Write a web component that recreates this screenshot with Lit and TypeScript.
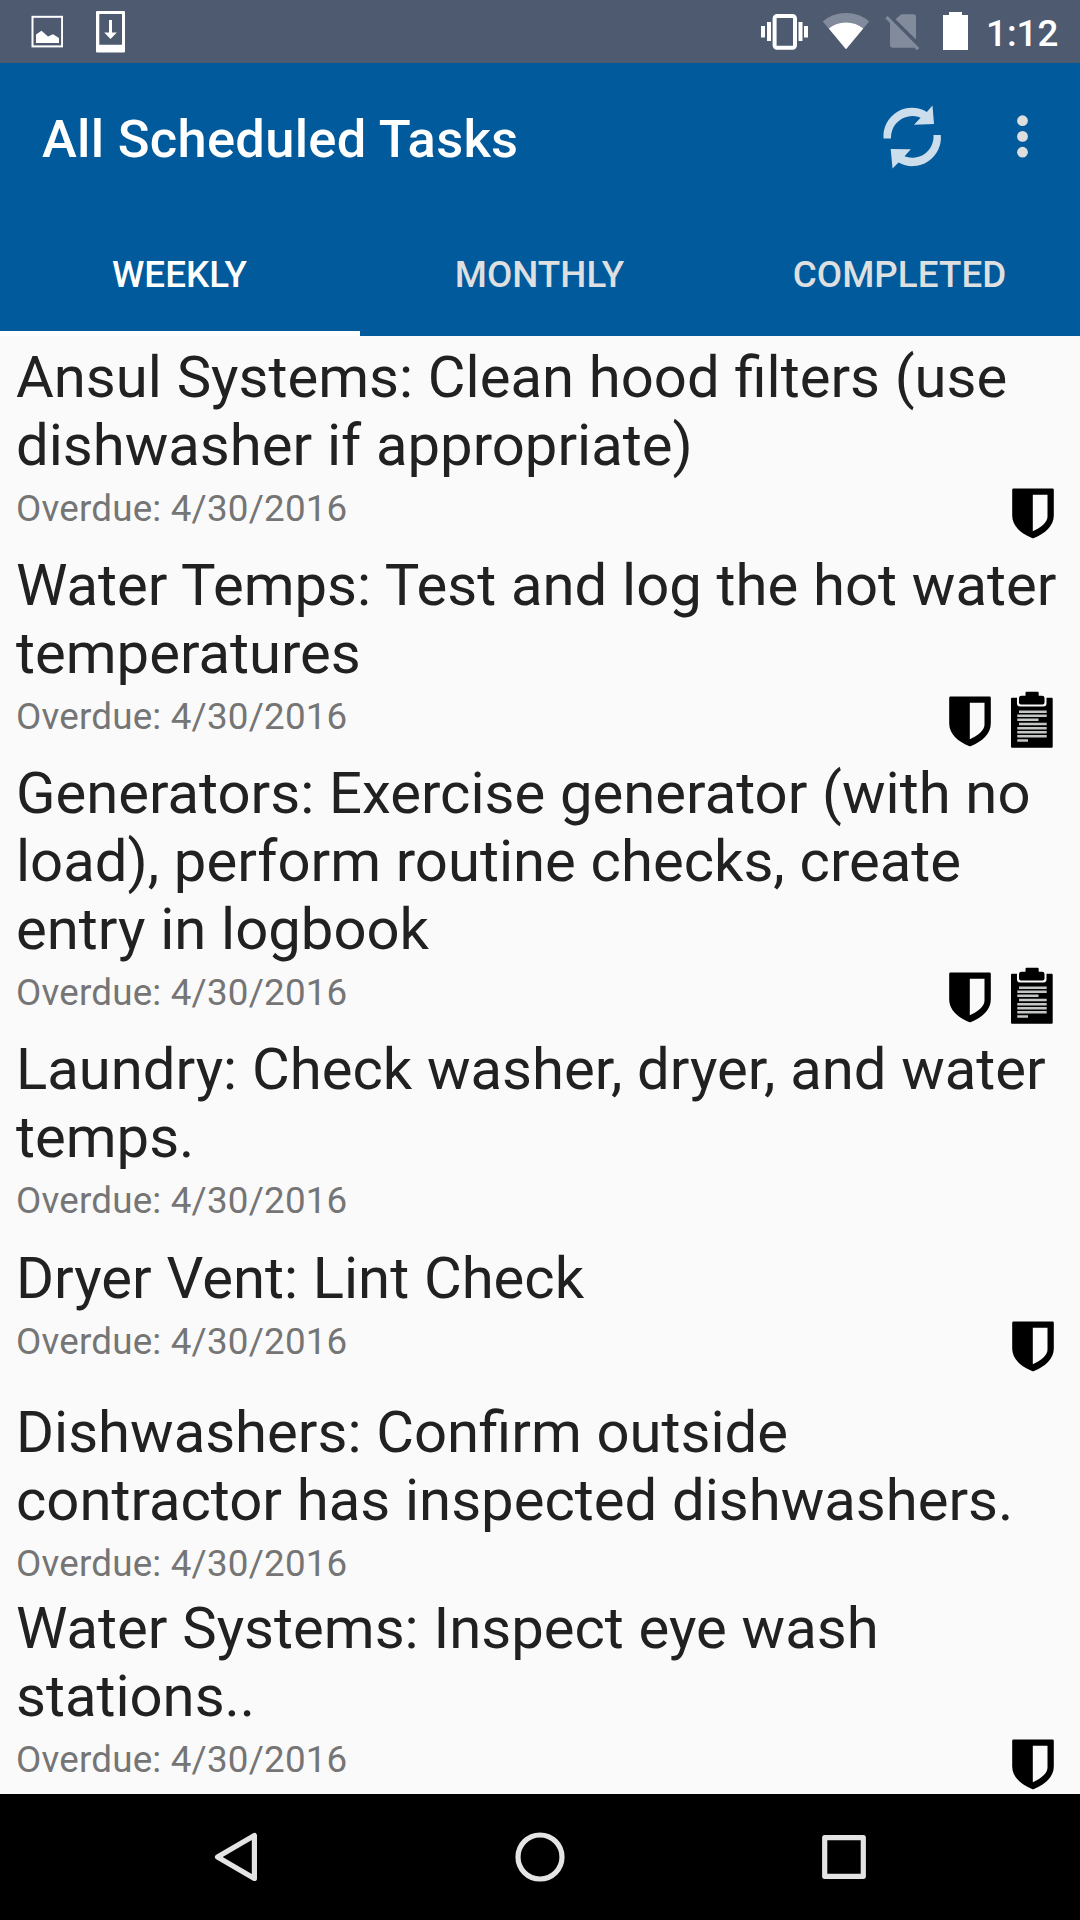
import { LitElement, html, css, svg, nothing } from "lit";
import { customElement, property } from "lit/decorators.js";
import { classMap } from "lit/directives/class-map.js";

interface Task {
  title: string;
  due: string;
  shield?: boolean;
  log?: boolean;
  spacing?: "snug" | "even" | "roomy";
}

const TASKS: Task[] = [
  { title: "Ansul Systems: Clean hood filters (use dishwasher if appropriate)", due: "4/30/2016", shield: true },
  { title: "Water Temps: Test and log the hot water temperatures", due: "4/30/2016", shield: true, log: true },
  { title: "Generators: Exercise generator (with no load), perform routine checks, create entry in logbook", due: "4/30/2016", shield: true, log: true },
  { title: "Laundry: Check washer, dryer, and water temps.", due: "4/30/2016", spacing: "even" },
  { title: "Dryer Vent: Lint Check", due: "4/30/2016", shield: true, spacing: "roomy" },
  { title: "Dishwashers: Confirm outside contractor has inspected dishwashers.", due: "4/30/2016", spacing: "snug" },
  { title: "Water Systems: Inspect eye wash stations..", due: "4/30/2016", shield: true },
];

@customElement("status-bar")
class StatusBar extends LitElement {
  static styles = css`
    :host {
      display: flex;
      height: 63px;
      background: #4d5a70;
      color: #fff;
      align-items: flex-start;
    }
    svg { display: block; height: 63px; flex: none; }
    .image { width: 32px; margin-left: 31px; }
    .download { width: 30px; margin-left: 33px; }
    .spacer { flex: 1; }
    .vibrate { width: 48px; }
    .wifi { width: 48px; margin-left: 13px; }
    .sim { width: 36px; margin-left: 15px; }
    .battery { width: 26px; margin-left: 22px; }
    .time {
      font-size: 36.75px;
      font-weight: 500;
      line-height: 43px;
      margin: 12px 22px 0 17px;
      width: 72px;
      white-space: nowrap;
    }
  `;
  render() {
    return html`
      <svg class="image" viewBox="31 0 32 63">
        <rect x="32.5" y="16.8" width="29.6" height="29.6" fill="none" stroke="#fff" stroke-width="2"></rect>
        <path d="M36 43V34.5L41.5 30.7L48 36.6L53 34.3L59 38V43Z" fill="#fff"></path>
      </svg>
      <svg class="download" viewBox="96 0 30 63">
        <path fill="#fff" fill-rule="evenodd" d="M97 11H124Q125 11 125 12V51.5Q125 52.5 124 52.5H97Q96 52.5 96 51.5V12Q96 11 97 11ZM99.3 14V44.7H122V14Z"></path>
        <path fill="#fff" d="M109 20H112V32.5H116.8L110.5 39L104.2 32.5H109Z"></path>
      </svg>
      <div class="spacer"></div>
      <svg class="vibrate" viewBox="761 0 48 63">
        <rect x="774.6" y="16" width="20.4" height="31.8" rx="2.5" fill="none" stroke="#fff" stroke-width="4"></rect>
        <path fill="#fff" d="M761 26h4v11.5h-4zM767 22h4v19h-4zM798.5 22h4v19h-4zM804 26h4v11.5h-4z"></path>
      </svg>
      <svg class="wifi" viewBox="822 0 48 63">
        <path fill="#fff" fill-opacity=".3" d="M846 49.3L822.8 21.5Q832 13 846 13T869.2 21.5Z"></path>
        <path fill="#fff" d="M846 49.3L828.8 28.6Q836 22.5 846 22.5T863.2 28.6Z"></path>
      </svg>
      <svg class="sim" viewBox="885 0 36 63">
        <path fill="#fff" fill-opacity=".3" d="M895.5 19.3L900.6 14.8Q901.2 14.3 902.2 14.3H913.5Q916 14.3 916 16.8V39.5ZM887.6 16L919.3 48L917 50.3L914.5 47.8H893Q890 47.8 890 44.8V23L885.3 18.3Z"></path>
      </svg>
      <svg class="battery" viewBox="943 0 26 63">
        <path fill="#fff" d="M949 12H962V15H968V50H943V15H949Z"></path>
      </svg>
      <div class="time">1:12</div>
    `;
  }
}

@customElement("app-toolbar")
class AppToolbar extends LitElement {
  static styles = css`
    :host {
      display: flex;
      height: 147px;
      align-items: center;
      padding: 0 42px;
      box-sizing: border-box;
      background: #005a9b;
      color: #fff;
    }
    .title {
      flex: 1;
      font-size: 52.5px;
      font-weight: 500;
      line-height: 62px;
      letter-spacing: 0.28px;
      padding-top: 5px;
      margin: 0;
      white-space: nowrap;
    }
    svg { display: block; flex: none; }
    .refresh { width: 64px; height: 72px; }
    .more { width: 18px; height: 72px; margin: 0 7px 0 69px; }
  `;
  render() {
    return html`
      <h1 class="title">All Scheduled Tasks</h1>
      <svg class="refresh" viewBox="880 101 64 72">
        <g fill="#ccdeeb">
          <path d="M883.5 138.5A28.5 28.5 0 0 1 926.8 112L932.5 105.5L934 124L914 124.8L920.6 117.8A21.3 21.3 0 0 0 891 138.5Z"></path>
          <path d="M940.8 135A28.5 28.5 0 0 1 898.5 162.5L892.5 168.5L890.7 149L910.8 149.2L904.5 156.3A21.3 21.3 0 0 0 933.5 135Z"></path>
        </g>
      </svg>
      <svg class="more" viewBox="1013 101 18 72">
        ${[120.7, 136.4, 152.2].map((y) => svg`<circle cx="1022.5" cy=${y} r="5.4" fill="#dedede"></circle>`)}
      </svg>
    `;
  }
}

@customElement("tab-strip")
class TabStrip extends LitElement {
  @property({ type: Number }) selected = 0;
  static styles = css`
    :host {
      display: grid;
      grid-template-columns: repeat(3, 1fr);
      height: 126px;
      background: #005a9b;
    }
    .tab {
      display: flex;
      align-items: center;
      justify-content: center;
      box-sizing: border-box;
      padding: 8px 1px 0 0;
      border-bottom: 5px solid transparent;
      font-size: 36.75px;
      font-weight: 500;
      letter-spacing: 0.05px;
      color: #dddfe1;
    }
    .active { color: #fff; border-bottom-color: #fff; }
  `;
  render() {
    return ["WEEKLY", "MONTHLY", "COMPLETED"].map(
      (label, i) => html`<div class=${classMap({ tab: true, active: i === this.selected })}>${label}</div>`
    );
  }
}

@customElement("task-row")
class TaskRow extends LitElement {
  @property({ attribute: false }) task!: Task;
  static styles = css`
    :host { display: block; padding: 0 16px; }
    .title {
      font-size: 58px;
      line-height: 68px;
      word-spacing: 0.4px;
      padding-right: 4px;
      color: #212121;
    }
    .meta { display: flex; justify-content: space-between; height: 72px; }
    .snug { height: 60px; }
    .even { height: 73px; }
    .roomy { height: 86px; }
    .due {
      font-size: 36.75px;
      line-height: 43px;
      letter-spacing: 0.2px;
      padding-top: 8px;
      color: #757575;
    }
    .icons { display: flex; padding-top: 3px; }
    svg { display: block; width: 63px; height: 63px; }
  `;
  render() {
    const t = this.task;
    return html`
      <div class="title">${t.title}</div>
      <div class=${classMap({ meta: true, [t.spacing ?? "regular"]: true })}>
        <div class="due">Overdue: ${t.due}</div>
        <div class="icons">
          ${t.shield
            ? html`<svg viewBox="0 0 63 63">
                <path fill-rule="evenodd" d="M12.5 6.6H51.5Q52.8 6.6 52.8 8V33.5C52.8 44 44 51.5 33 56Q32 56.6 31 56C20 51.5 11.2 44 11.2 33.5V8Q11.2 6.6 12.5 6.6ZM31.8 12.7V49.2C40 45.5 46.5 40.5 46.5 34.5V12.7Z"></path>
              </svg>`
            : nothing}
          ${t.log
            ? html`<svg viewBox="0 0 63 63">
                <path d="M11 7.7H16V13.5Q16 16.5 19 16.5H42.5Q45.5 16.5 45.5 13.5V7.7H50.7Q51.7 7.7 51.7 8.7V56.7Q51.7 57.7 50.7 57.7H11Q10 57.7 10 56.7V8.7Q10 7.7 11 7.7Z"></path>
                <path d="M25.5 1.7H36.5Q37.7 1.7 37.7 3V5.7H41Q43.5 5.7 43.5 8V12.5Q43.5 14.5 41.5 14.5H20Q18 14.5 18 12.5V8Q18 5.7 20.5 5.7H24.5V3Q24.5 1.7 25.5 1.7Z"></path>
                <path fill="none" stroke="#c4c6c6" stroke-width="2.5" d="M18 21.7H45.7M16.3 25.8H45.7M16.3 29.8H37.5M18 34H45.7M16.3 38.2H45.7M16.3 42.2H45.7M16.3 46.3H45.7M16.3 50.4H27"></path>
              </svg>`
            : nothing}
        </div>
      </div>
    `;
  }
}

@customElement("nav-bar")
class NavBar extends LitElement {
  static styles = css`
    :host {
      display: flex;
      justify-content: center;
      align-items: center;
      gap: 240px;
      height: 126px;
      background: #000;
    }
    svg { display: block; width: 64px; height: 64px; fill: none; stroke: #e4e4e4; stroke-width: 5.2; stroke-linejoin: round; }
  `;
  render() {
    return html`
      <svg viewBox="0 0 64 64"><path d="M50.4 10.6V53.4L13.5 32Z"></path></svg>
      <svg viewBox="0 0 64 64"><circle cx="32" cy="32" r="22"></circle></svg>
      <svg viewBox="0 0 64 64"><rect x="12.7" y="12.7" width="38.6" height="38.6"></rect></svg>
    `;
  }
}

@customElement("app-root")
class AppRoot extends LitElement {
  static styles = css`
    :host {
      display: flex;
      flex-direction: column;
      width: 1080px;
      height: 1920px;
      overflow: hidden;
      background: #fafafa;
      font-family: Roboto, "Liberation Sans", sans-serif;
    }
    status-bar, app-toolbar, tab-strip, nav-bar { flex: none; }
    .list { flex: 1; min-height: 0; overflow: hidden; padding-top: 7px; box-sizing: border-box; }
  `;
  render() {
    return html`
      <status-bar></status-bar>
      <app-toolbar></app-toolbar>
      <tab-strip></tab-strip>
      <div class="list">${TASKS.map((t) => html`<task-row .task=${t}></task-row>`)}</div>
      <nav-bar></nav-bar>
    `;
  }
}
